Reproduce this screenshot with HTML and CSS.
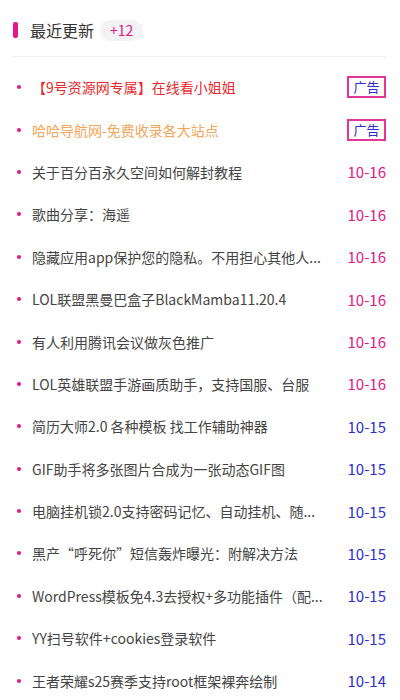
FILE: index.html
```html
<!DOCTYPE html>
<html lang="zh-CN">
<head>
    <meta charset="UTF-8">
    <meta name="viewport" content="width=device-width, initial-scale=1.0">
    <title>最近更新</title>
    <link rel="stylesheet" href="styles.css">
</head>
<body>
    <div class="panel">
        <div class="panel-head">
            <span class="head-bar"></span>
            <h2>最近更新</h2>
            <span class="count">+12</span>
        </div>
        <ul class="news">
            <li><span class="title red">【9号资源网专属】在线看小姐姐</span><span class="ad">广告</span></li>
            <li><span class="title orange">哈哈导航网-免费收录各大站点</span><span class="ad">广告</span></li>
            <li><span class="title">关于百分百永久空间如何解封教程</span><span class="date new">10-16</span></li>
            <li><span class="title">歌曲分享：海遥</span><span class="date new">10-16</span></li>
            <li><span class="title">隐藏应用app保护您的隐私。不用担心其他人...</span><span class="date new">10-16</span></li>
            <li><span class="title">LOL联盟黑曼巴盒子BlackMamba11.20.4</span><span class="date new">10-16</span></li>
            <li><span class="title">有人利用腾讯会议做灰色推广</span><span class="date new">10-16</span></li>
            <li><span class="title">LOL英雄联盟手游画质助手，支持国服、台服</span><span class="date new">10-16</span></li>
            <li><span class="title">简历大师2.0 各种模板 找工作辅助神器</span><span class="date">10-15</span></li>
            <li><span class="title">GIF助手将多张图片合成为一张动态GIF图</span><span class="date">10-15</span></li>
            <li><span class="title">电脑挂机锁2.0支持密码记忆、自动挂机、随...</span><span class="date">10-15</span></li>
            <li><span class="title">黑产“呼死你”短信轰炸曝光：附解决方法</span><span class="date">10-15</span></li>
            <li><span class="title">WordPress模板免4.3去授权+多功能插件（配...</span><span class="date">10-15</span></li>
            <li><span class="title">YY扫号软件+cookies登录软件</span><span class="date">10-15</span></li>
            <li><span class="title">王者荣耀s25赛季支持root框架裸奔绘制</span><span class="date">10-14</span></li>
        </ul>
    </div>
</body>
</html>
```

FILE: styles.css
```css
body {
    margin: 0;
    background: #ffffff;
    font-family: "Noto Sans CJK SC", "Noto Sans", sans-serif;
    color: #444;
}

.panel {
    padding: 0 14px 0 13px;
}

/* Header */
.panel-head {
    display: flex;
    align-items: center;
    height: 40px;
    padding-top: 10px;
    padding-bottom: 6px;
    border-bottom: 1px solid #f0f0f0;
}

.head-bar {
    width: 5px;
    height: 16px;
    border-radius: 2px;
    background: #e5158c;
    margin-right: 12px;
}

.panel-head h2 {
    margin: 0;
    font-size: 16px;
    font-weight: normal;
    color: #333;
}

.count {
    margin-left: 6px;
    padding: 0 10px;
    height: 21px;
    line-height: 21px;
    border-radius: 11px;
    background: #f3f3f4;
    color: #e5158c;
    font-size: 14px;
}

/* List */
.news {
    list-style: none;
    margin: 0;
    padding: 9px 0 0;
}

.news li {
    display: flex;
    align-items: center;
    height: 42.4px;
    font-size: 14px;
}

.news li::before {
    content: "";
    width: 4px;
    height: 4px;
    border-radius: 50%;
    background: #e5158c;
    margin: 0 11px 0 4px;
    flex-shrink: 0;
}

.title {
    flex: 1;
    min-width: 0;
    white-space: nowrap;
    overflow: hidden;
    padding-right: 12px;
}

.title.red {
    color: #ea2a2e;
}

.title.orange {
    color: #f5a65b;
}

.date {
    width: 39px;
    text-align: right;
    font-size: 15px;
    color: #2d2dd4;
}

.date.new {
    color: #e5158c;
}

.ad {
    width: 35px;
    height: 18px;
    line-height: 18px;
    text-align: center;
    border: 2px solid #e0359a;
    color: #2d2dd4;
    font-size: 13px;
}
```
